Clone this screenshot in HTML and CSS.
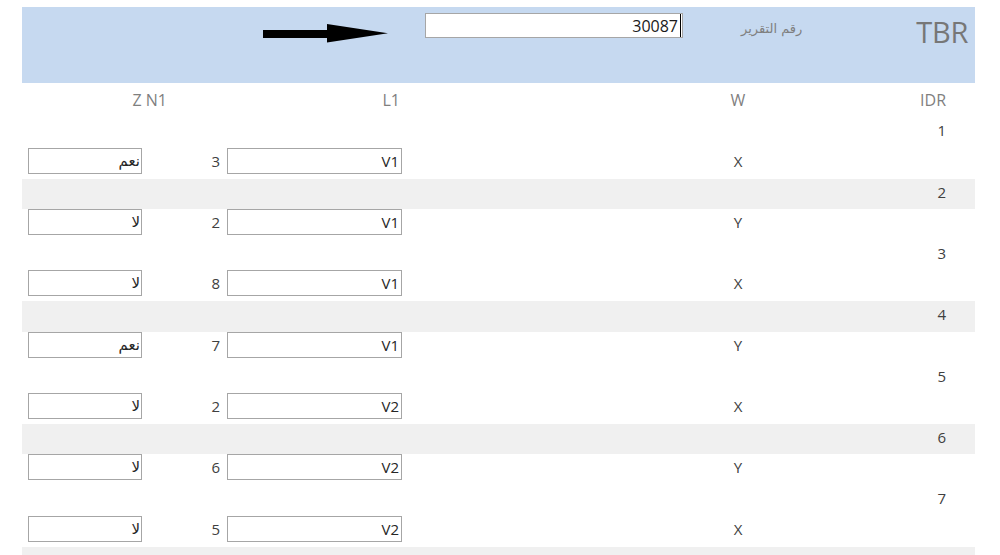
FILE: index.html
```html
<!DOCTYPE html>
<html lang="ar">
<head>
<meta charset="utf-8">
<title>TBR</title>
<link rel="stylesheet" href="styles.css">
</head>
<body>
<div class="page">
  <div class="banner">
    <svg class="arrow" width="125" height="19" viewBox="0 0 125 19">
      <rect x="0" y="6" width="65" height="8" fill="#000"/>
      <path d="M64 0 L125 9.3 L64 18.5 Z" fill="#000"/>
    </svg>
    <div class="report-box"><span class="report-val">30087</span><span class="caret"></span></div>
    <div class="report-label">رقم التقرير</div>
    <div class="title">TBR</div>
  </div>

  <div class="grid heads">
    <div class="h-zn">Z N1</div>
    <div class="h-l1">L1</div>
    <div class="c-w">W</div>
    <div class="c-idr">IDR</div>
  </div>

  <div class="rec">
    <div class="top"><div class="c-idr">1</div></div>
    <div class="grid bot"><div class="box ar">نعم</div><div class="c-n1">3</div><div class="box">V1</div><div class="c-w">X</div></div>
  </div>
  <div class="rec alt">
    <div class="top"><div class="c-idr">2</div></div>
    <div class="grid bot"><div class="box ar">لا</div><div class="c-n1">2</div><div class="box">V1</div><div class="c-w">Y</div></div>
  </div>
  <div class="rec">
    <div class="top"><div class="c-idr">3</div></div>
    <div class="grid bot"><div class="box ar">لا</div><div class="c-n1">8</div><div class="box">V1</div><div class="c-w">X</div></div>
  </div>
  <div class="rec alt">
    <div class="top"><div class="c-idr">4</div></div>
    <div class="grid bot"><div class="box ar">نعم</div><div class="c-n1">7</div><div class="box">V1</div><div class="c-w">Y</div></div>
  </div>
  <div class="rec">
    <div class="top"><div class="c-idr">5</div></div>
    <div class="grid bot"><div class="box ar">لا</div><div class="c-n1">2</div><div class="box">V2</div><div class="c-w">X</div></div>
  </div>
  <div class="rec alt">
    <div class="top"><div class="c-idr">6</div></div>
    <div class="grid bot"><div class="box ar">لا</div><div class="c-n1">6</div><div class="box">V2</div><div class="c-w">Y</div></div>
  </div>
  <div class="rec">
    <div class="top"><div class="c-idr">7</div></div>
    <div class="grid bot"><div class="box ar">لا</div><div class="c-n1">5</div><div class="box">V2</div><div class="c-w">X</div></div>
  </div>
  <div class="rec alt">
    <div class="top"><div class="c-idr">8</div></div>
  </div>
</div>
</body>
</html>
```

FILE: styles.css
```css
html, body {
  margin: 0;
  padding: 0;
  background: #ffffff;
  overflow: hidden;
}
body {
  font-family: "Open Sans", "DejaVu Sans", sans-serif;
  font-size: 15px;
  color: #404040;
}
.page {
  margin: 7px 0 0 22px;
  width: 953px;
}
.banner {
  height: 76px;
  background: #c6d9f0;
  display: flex;
  align-items: flex-start;
}
.arrow {
  display: block;
  margin: 17px 0 0 241px;
  flex: none;
}
.report-box {
  margin: 6px 0 0 37px;
  width: 258px;
  height: 25px;
  box-sizing: border-box;
  background: #ffffff;
  border: 1px solid #a6a6a6;
  display: flex;
  justify-content: flex-end;
  align-items: center;
  padding-right: 1px;
  font-size: 16px;
  color: #1a1a1a;
}
.report-val {
  line-height: 22px;
}
.caret {
  display: block;
  width: 1px;
  height: 23px;
  background: #000;
  margin-left: 2px;
}
.report-label {
  margin: 12px 0 0 58px;
  font-family: "DejaVu Sans", sans-serif;
  font-size: 13px;
  line-height: 20px;
  color: #7f7f7f;
  direction: rtl;
}
.title {
  margin: 10px 7px 0 auto;
  font-size: 29px;
  line-height: 30px;
  letter-spacing: -0.3px;
  color: #777777;
}
.grid {
  display: grid;
  grid-template-columns: 6px 114px 78px 7px 175px 286px 100px 158px 29px;
}
.heads {
  height: 34.3px;
  padding-top: 4px;
  box-sizing: border-box;
  color: #7f7f7f;
  font-size: 16px;
  line-height: 26px;
}
.h-zn {
  grid-column: 2 / 4;
  text-align: right;
  padding-right: 53px;
}
.h-l1 {
  grid-column: 5;
  text-align: right;
  padding-right: 2px;
}
.c-w {
  grid-column: 7;
  text-align: center;
  line-height: 26px;
}
.c-idr {
  grid-column: 8;
  text-align: right;
  line-height: 26px;
}
.rec .top {
  height: 30.33px;
}
.rec .top .c-idr {
  width: 924px;
}
.rec.alt .top {
  background: #f0f0f0;
}
.bot {
  height: 31px;
  align-items: start;
}
.box {
  height: 26px;
  box-sizing: border-box;
  border: 1px solid #a6a6a6;
  background: #ffffff;
  text-align: right;
  padding-right: 2px;
  line-height: 24px;
  color: #262626;
}
.bot .box.ar {
  grid-column: 2;
  direction: rtl;
  font-family: "DejaVu Sans", sans-serif;
  font-size: 15px;
  padding-right: 1px;
}
.c-n1 {
  grid-column: 3;
  text-align: right;
  line-height: 26px;
}
.bot .box:not(.ar) {
  grid-column: 5;
}
```
